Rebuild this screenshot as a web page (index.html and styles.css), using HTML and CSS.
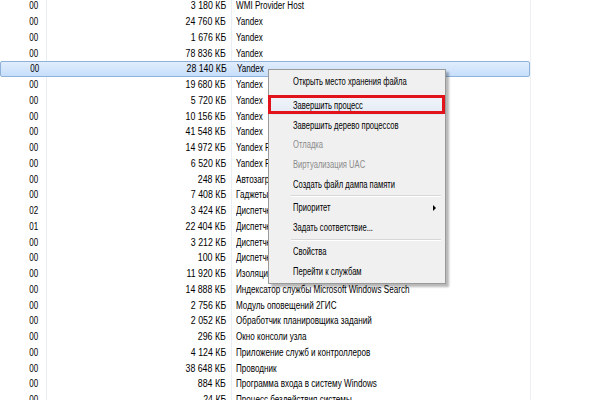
FILE: index.html
```html
<!DOCTYPE html>
<html>
<head>
<meta charset="utf-8">
<link rel="stylesheet" href="styles.css">
</head>
<body>
<div class="view">
  <div class="table">
    <div class="row"><span class="c1"><i>00</i></span><span class="c2"><i>3 180 КБ</i></span><span class="c3"><i>WMI Provider Host</i></span></div>
    <div class="row"><span class="c1"><i>00</i></span><span class="c2"><i>24 760 КБ</i></span><span class="c3"><i>Yandex</i></span></div>
    <div class="row"><span class="c1"><i>00</i></span><span class="c2"><i>1 676 КБ</i></span><span class="c3"><i>Yandex</i></span></div>
    <div class="row"><span class="c1"><i>00</i></span><span class="c2"><i>78 836 КБ</i></span><span class="c3"><i>Yandex</i></span></div>
    <div class="row sel"><span class="c1"><i>00</i></span><span class="c2"><i>28 140 КБ</i></span><span class="c3"><i>Yandex</i></span></div>
    <div class="row"><span class="c1"><i>00</i></span><span class="c2"><i>19 680 КБ</i></span><span class="c3"><i>Yandex</i></span></div>
    <div class="row"><span class="c1"><i>00</i></span><span class="c2"><i>5 720 КБ</i></span><span class="c3"><i>Yandex</i></span></div>
    <div class="row"><span class="c1"><i>00</i></span><span class="c2"><i>10 156 КБ</i></span><span class="c3"><i>Yandex</i></span></div>
    <div class="row"><span class="c1"><i>00</i></span><span class="c2"><i>41 548 КБ</i></span><span class="c3"><i>Yandex</i></span></div>
    <div class="row"><span class="c1"><i>00</i></span><span class="c2"><i>14 972 КБ</i></span><span class="c3"><i>Yandex Plugins</i></span></div>
    <div class="row"><span class="c1"><i>00</i></span><span class="c2"><i>6 520 КБ</i></span><span class="c3"><i>Yandex Plugins</i></span></div>
    <div class="row"><span class="c1"><i>00</i></span><span class="c2"><i>248 КБ</i></span><span class="c3"><i>Автозагрузчик Windows</i></span></div>
    <div class="row"><span class="c1"><i>00</i></span><span class="c2"><i>7 408 КБ</i></span><span class="c3"><i>Гаджеты рабочего стола Windows</i></span></div>
    <div class="row"><span class="c1"><i>02</i></span><span class="c2"><i>3 424 КБ</i></span><span class="c3"><i>Диспетчер задач Windows</i></span></div>
    <div class="row"><span class="c1"><i>01</i></span><span class="c2"><i>22 404 КБ</i></span><span class="c3"><i>Диспетчер окон рабочего стола</i></span></div>
    <div class="row"><span class="c1"><i>00</i></span><span class="c2"><i>3 212 КБ</i></span><span class="c3"><i>Диспетчер печати</i></span></div>
    <div class="row"><span class="c1"><i>00</i></span><span class="c2"><i>100 КБ</i></span><span class="c3"><i>Диспетчер сеанса Windows</i></span></div>
    <div class="row"><span class="c1"><i>00</i></span><span class="c2"><i>11 920 КБ</i></span><span class="c3"><i>Изоляция графов аудиоустройств Windows</i></span></div>
    <div class="row"><span class="c1"><i>00</i></span><span class="c2"><i>14 888 КБ</i></span><span class="c3"><i>Индексатор службы Microsoft Windows Search</i></span></div>
    <div class="row"><span class="c1"><i>00</i></span><span class="c2"><i>2 756 КБ</i></span><span class="c3"><i>Модуль оповещений 2ГИС</i></span></div>
    <div class="row"><span class="c1"><i>00</i></span><span class="c2"><i>2 052 КБ</i></span><span class="c3"><i>Обработчик планировщика заданий</i></span></div>
    <div class="row"><span class="c1"><i>00</i></span><span class="c2"><i>296 КБ</i></span><span class="c3"><i>Окно консоли узла</i></span></div>
    <div class="row"><span class="c1"><i>00</i></span><span class="c2"><i>4 124 КБ</i></span><span class="c3"><i>Приложение служб и контроллеров</i></span></div>
    <div class="row"><span class="c1"><i>00</i></span><span class="c2"><i>38 648 КБ</i></span><span class="c3"><i>Проводник</i></span></div>
    <div class="row"><span class="c1"><i>00</i></span><span class="c2"><i>884 КБ</i></span><span class="c3"><i>Программа входа в систему Windows</i></span></div>
    <div class="row"><span class="c1"><i>00</i></span><span class="c2"><i>24 КБ</i></span><span class="c3"><i>Процесс бездействия системы</i></span></div>
  </div>

  <div class="menu">
    <div class="item"><i>Открыть место хранения файла</i></div>
    <div class="sep blank"></div>
    <div class="item hover"><i>Завершить процесс</i></div>
    <div class="item"><i>Завершить дерево процессов</i></div>
    <div class="item off"><i>Отладка</i></div>
    <div class="item off"><i>Виртуализация UAC</i></div>
    <div class="item"><i>Создать файл дампа памяти</i></div>
    <div class="sep"></div>
    <div class="item sub"><i>Приоритет</i></div>
    <div class="item"><i>Задать соответствие...</i></div>
    <div class="sep"></div>
    <div class="item"><i>Свойства</i></div>
    <div class="item"><i>Перейти к службам</i></div>
  </div>
  <div class="mark"></div>
</div>
</body>
</html>
```
FILE: styles.css
```css
html, body {
  margin: 0;
  padding: 0;
  background: #ffffff;
}
body {
  width: 600px;
  height: 400px;
  overflow: hidden;
  font-family: "Liberation Sans", Arial, sans-serif;
  font-size: 10px;
  color: #000000;
}
i {
  font-style: normal;
  display: inline-block;
  white-space: nowrap;
}
.view {
  position: relative;
  width: 600px;
  height: 400px;
  overflow: hidden;
}
.table {
  width: 530px;
  margin-top: -2px;
  display: flex;
  flex-direction: column;
  background:
    linear-gradient(#e9eef5, #e9eef5) 46px 0 / 1px 100% no-repeat,
    linear-gradient(#e9eef5, #e9eef5) 231px 0 / 1px 100% no-repeat;
  border-right: 1px solid #edf1f6;
  height: 420px;
}
.row {
  height: 15.76px;
  flex: 0 0 15.76px;
  display: flex;
  align-items: center;
  box-sizing: border-box;
  white-space: nowrap;
}
.c1 {
  width: 38px;
  text-align: right;
  flex: none;
}
.c1 i {
  transform: scaleX(0.8);
  transform-origin: right center;
}
.c2 {
  width: 188px;
  text-align: right;
  flex: none;
}
.c2 i {
  transform: scaleX(0.88);
  transform-origin: right center;
}
.c3 {
  padding-left: 10px;
  flex: none;
}
.c3 i {
  transform: scaleX(0.81);
  transform-origin: left center;
}
.sel {
  background: linear-gradient(#e1edfc, #c6defb);
  border: 1px solid #8fb2db;
  border-radius: 2px;
}
.menu {
  position: absolute;
  left: 268px;
  top: 69px;
  width: 178px;
  box-sizing: border-box;
  padding: 2px 2px;
  background: #f0f0f0;
  border: 1px solid #9a9a9a;
  box-shadow: 3px 3px 2px rgba(0, 0, 0, 0.28);
}
.item {
  height: 19.7px;
  display: flex;
  align-items: center;
  padding-left: 22px;
  color: #000000;
  position: relative;
}
.item i {
  transform: scaleX(0.76);
  transform-origin: left center;
}
.item.off {
  color: #8c8c8c;
}
.item.hover {
  background: linear-gradient(#f1f5fa, #e2eaf4);
}
.item.sub::after {
  content: "";
  position: absolute;
  right: 7px;
  top: 7px;
  border-left: 3px solid #000;
  border-top: 3px solid transparent;
  border-bottom: 3px solid transparent;
}
.sep {
  height: 4px;
  margin-left: 20px;
  margin-right: 2px;
  background: linear-gradient(#f0f0f0 1px, #d7d7d7 1px, #d7d7d7 2px, #ffffff 2px, #ffffff 3px, #f0f0f0 3px);
}
.sep.blank {
  background: transparent;
}
.mark {
  position: absolute;
  left: 268px;
  top: 95px;
  width: 177px;
  height: 19px;
  box-sizing: border-box;
  border: 3px solid #e3131b;
}
```
